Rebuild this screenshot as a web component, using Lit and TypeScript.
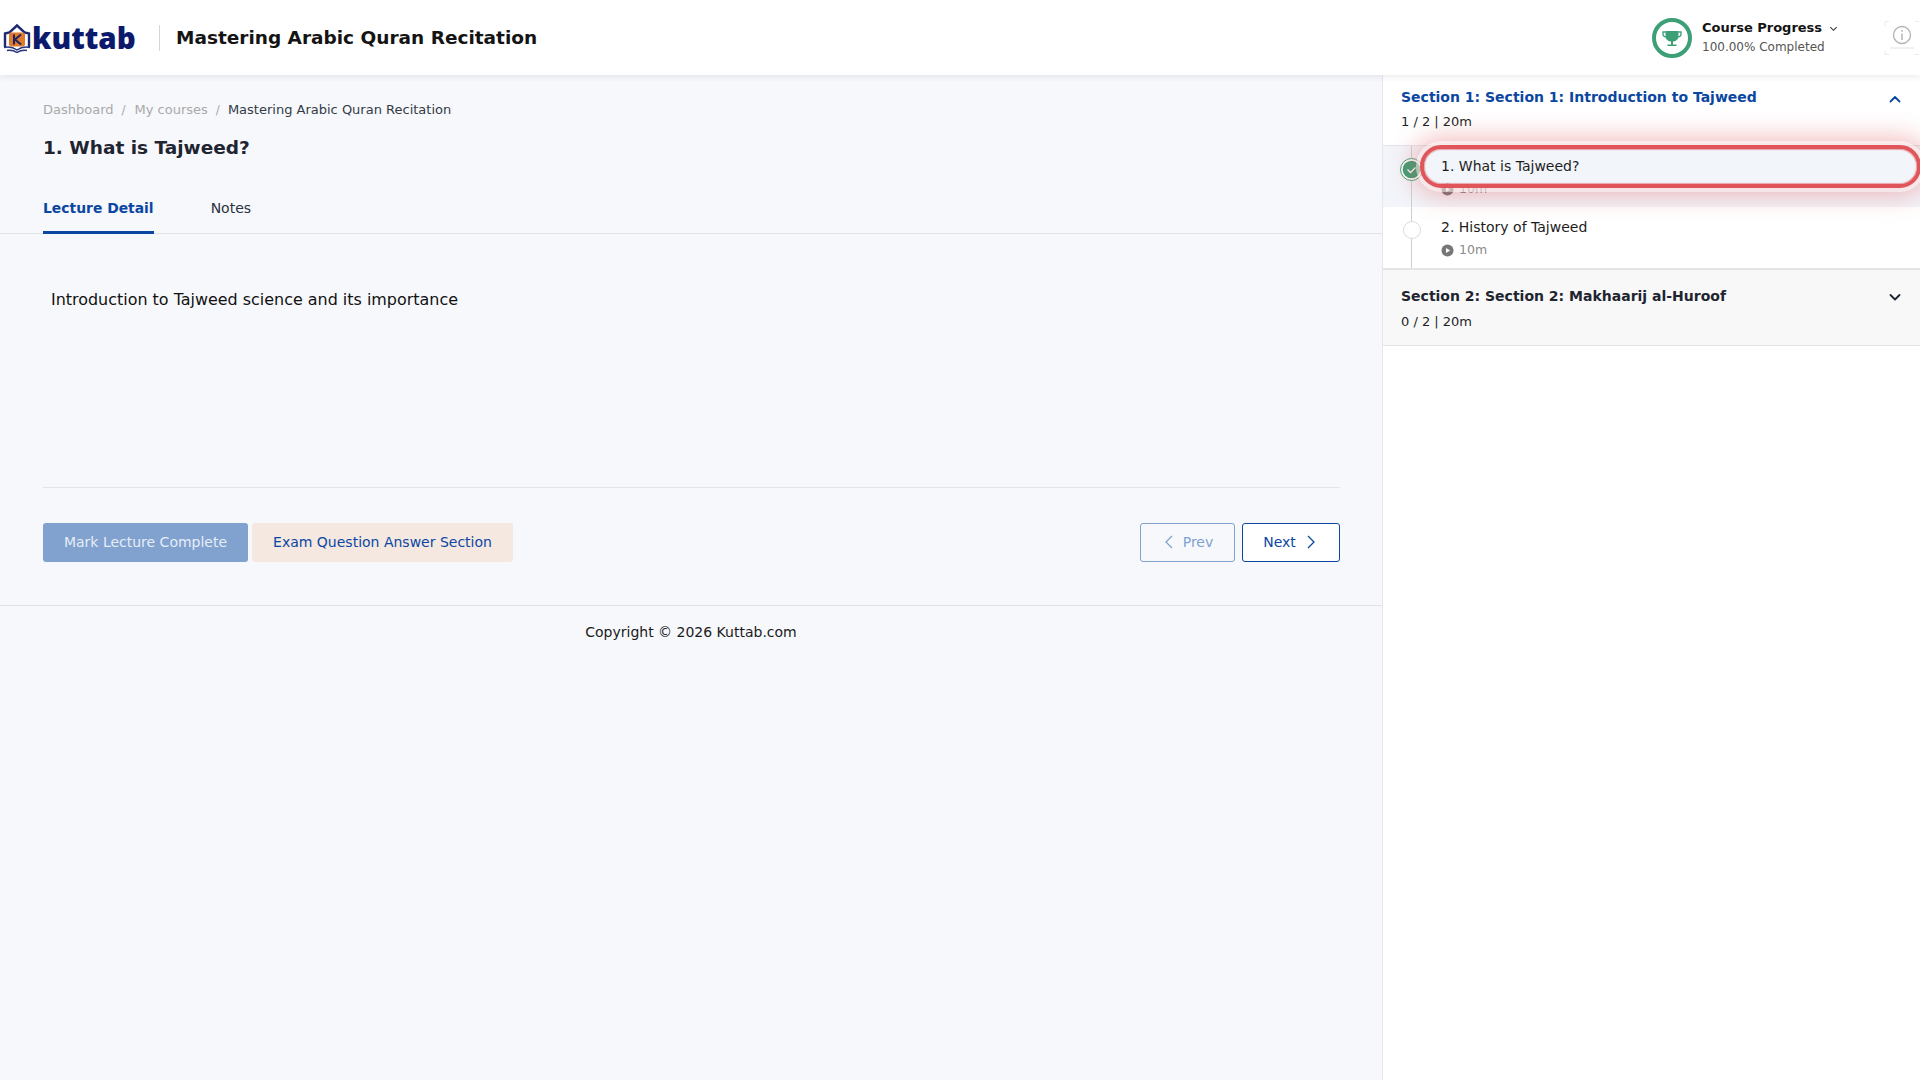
import { LitElement, html, css } from "lit";
import { customElement } from "lit/decorators.js";

const play = html`<svg class="play" viewBox="0 0 14 14" width="13" height="13"><circle cx="7" cy="7" r="6.5" fill="#777"/><path d="M5.4 4.2 9.8 7l-4.4 2.8z" fill="#fff"/></svg>`;
const chevron = (up: boolean, color: string) => html`<svg class="chev" viewBox="0 0 14 14" width="14" height="14"><path d=${up ? "M2.5 9.5 7 5l4.5 4.5" : "M2.5 5 7 9.5 11.5 5"} fill="none" stroke=${color} stroke-width="1.8" stroke-linecap="round" stroke-linejoin="round"/></svg>`;

@customElement("app-root")
export class AppRoot extends LitElement {
  static styles = css`
    :host { display: flex; flex-direction: column; height: 1080px; overflow: hidden; font-family: "DejaVu Sans", sans-serif; color: #1e2530; background: #f7f8fc; }
    * { box-sizing: border-box; }
    header { height: 75px; flex: none; background: #fff; display: flex; align-items: center; box-shadow: 0 2px 6px rgba(30,40,60,.09); position: relative; z-index: 3; padding-left: 3px; }
    .logo { display: flex; align-items: center; width: 156px; height: 40px; }
    .logo-word { font-family: "Open Sans", sans-serif; font-weight: 800; font-size: 29.5px; line-height: 40px; color: #0c1a6c; margin-left: 1px; }
    .divider { width: 1px; height: 26px; background: #d6d6d6; margin-right: 16px; }
    .course { font-size: 18.5px; font-weight: 700; color: #141414; flex: 1; }
    .progress { display: flex; align-items: center; gap: 10px; width: 232px; }
    .ptext { display: flex; flex-direction: column; gap: 3px; }
    .ptitle { display: flex; align-items: center; gap: 7px; font-size: 13px; font-weight: 700; color: #141414; line-height: 16px; }
    .psub { font-size: 12px; color: #555; line-height: 16px; }
    .info { width: 36px; height: 36px; flex: none; }
    .body { flex: 1; display: flex; min-height: 0; }
    main { width: 1383px; flex: none; border-right: 1px solid #e4e6ea; display: flex; flex-direction: column; }
    .top { padding: 27px 42px 0 43px; }
    .crumbs { display: flex; align-items: center; font-size: 13px; line-height: 16px; color: #a9a9a9; }
    .crumbs i { font-style: normal; margin: 0 9px 0 8px; font-size: 12px; }
    .crumbs b { font-weight: 400; color: #333b46; margin-left: -1px; }
    h1 { font-size: 18.5px; font-weight: 700; margin: 18px 0 0; line-height: 24px; color: #1e2530; }
    .tabs { display: flex; gap: 57px; padding: 0 43px; border-bottom: 1px solid #e2e4e9; margin-top: 28px; height: 46px; }
    .tab { font-size: 14px; line-height: 18px; padding-top: 11px; color: #2a3240; }
    .tab.on { font-size: 13.9px; font-weight: 700; color: #0b47a1; border-bottom: 3px solid #0b47a1; margin-bottom: -1px; }
    .content { padding: 56px 42px 0 43px; }
    .lead { font-size: 15.95px; line-height: 20px; color: #111; padding-left: 8px; height: 198px; margin: 0; border-bottom: 1px solid #e2e4e9; }
    .actions { display: flex; align-items: flex-start; padding-top: 35px; height: 117px; }
    .btn { height: 39px; border-radius: 3px; font-size: 14px; display: flex; align-items: center; justify-content: center; padding-bottom: 1px; }
    .mark { width: 205px; background: #81a1cf; color: #e6edf7; }
    .exam { width: 261px; background: #f4e8e1; color: #0b47a1; margin-left: 4px; }
    .spacer { flex: 1; }
    .prev { width: 95px; border: 1px solid #81a1cf; color: #81a1cf; gap: 9px; padding-left: 2px; }
    .next { width: 98px; margin-left: 7px; border: 1px solid #0b47a1; background: #fff; color: #0b47a1; gap: 10px; padding-right: 3px; }
    footer { border-top: 1px solid #e2e4e9; text-align: center; font-size: 14px; line-height: 18px; padding-top: 17px; color: #1a1a1a; }
    aside { flex: 1; background: #fff; min-width: 0; }
    .sec { height: 71px; padding: 13px 18px 0; position: relative; border-bottom: 1px solid #e2e4e9; }
    .sec.closed { height: 76px; padding-top: 17px; background: #f8f8f8; }
    .sec-title { font-size: 14px; font-weight: 700; line-height: 18px; color: #0b47a1; }
    .closed .sec-title { color: #1e2530; }
    .sec-sub { font-size: 13px; line-height: 18px; margin-top: 7px; color: #1f1f1f; }
    .closed .sec-sub { margin-top: 8px; }
    .sec .chev { position: absolute; right: 18px; top: 17px; }
    .sec.closed .chev { top: 20px; }
    .lesson { height: 61px; display: flex; position: relative; padding: 11px 0 0 58px; }
    .lesson + .lesson { height: 63px; border-bottom: 2px solid #e4e4e4; }
    .lesson.cur { background: #f2f5fa; }
    .line { position: absolute; left: 28px; top: 0; bottom: 0; width: 1px; background: #cfcfcf; }
    .dot { position: absolute; left: 20px; top: 14px; width: 18px; height: 18px; border-radius: 50%; background: #fff; border: 1px solid #dcdcdc; }
    .dot.done { left: 17px; top: 12px; width: 23px; height: 23px; border: 0; }
    .dot svg { display: block; }
    .ltitle { font-size: 14px; line-height: 18px; color: #1d1d1d; }
    .lmeta { display: flex; align-items: center; gap: 5px; font-size: 12.5px; line-height: 16px; color: #8a8a8a; margin-top: 6px; }
    .hl { position: absolute; left: 37px; top: -1px; width: 501px; height: 43px; border: 4px solid #e05559; border-radius: 21px; box-shadow: inset 0 0 1px 1px rgba(224,85,89,.5), 0 0 0 4px rgba(255,255,255,.5), 0 0 24px 8px rgba(224,85,89,.38); z-index: 1; }
  `;

  render() {
    return html`
      <header>
        <div class="logo">
          <svg width="28" height="30" viewBox="0 0 28 30" style="flex:none">
            <path d="M2 24V10.500L6.500 9.500 14 2.500l7.500 7L26 10.500V24" fill="#fff" stroke="#1d2a72" stroke-width="2.400"/>
            <path d="M7.500 9.500h13l1.500 1.500v11l-1.500 1.500h-13L6 22V11z" fill="#e27a2e"/>
            <path d="M11 11.500v10M18 11.500l-6 5 6 5" fill="none" stroke="#1b2560" stroke-width="2"/>
            <path d="M1 24.500c5-1 9.500 0 13 2.500 3.500-2.500 8-3.500 13-2.500M4 27.500c3.500-.5 7 0 10 2 3-2 6.500-2.500 10-2" fill="none" stroke="#27367f" stroke-width="1.500"/>
          </svg>
          <span class="logo-word">kuttab</span>
        </div>
        <div class="divider"></div>
        <div class="course">Mastering Arabic Quran Recitation</div>
        <div class="progress">
          <svg width="40" height="40" viewBox="0 0 40 40">
            <circle cx="20" cy="20" r="18" fill="#fff" stroke="#3d9f76" stroke-width="4"/>
            <path d="M13.500 13h13v4.500c0 4-2.500 6-6.500 6s-6.500-2-6.500-6z" fill="#3d9f76"/>
            <path d="M13.500 14h-2.500v2c0 1.800 1 2.800 3 3.200M26.500 14h2.500v2c0 1.800-1 2.800-3 3.200" fill="none" stroke="#3d9f76" stroke-width="1.300"/>
            <path d="M19 23h2v3.500h-2zM15.500 26.500h9V28h-9z" fill="#3d9f76"/>
          </svg>
          <div class="ptext">
            <div class="ptitle">Course Progress <svg viewBox="0 0 10 10" width="9" height="9"><path d="M1.500 3.500 5 7l3.500-3.500" fill="none" stroke="#333" stroke-width="1.200"/></svg></div>
            <div class="psub">100.00% Completed</div>
          </div>
        </div>
        <svg class="info" viewBox="0 0 36 36">
          <path d="M1 6V1.500h4M31 1.500h4M1 31v3.500h4M31 34.500h4" fill="none" stroke="#dfe5f0" stroke-width=".8"/>
          <circle cx="18" cy="15" r="8.500" fill="none" stroke="#b5b5b5" stroke-width="1.400"/>
          <path d="M18 13.500v6.500M18 10v1.800" stroke="#b5b5b5" stroke-width="1.500"/>
          <path d="M6 28h24" stroke="#e2e2e2" stroke-width="1"/>
        </svg>
      </header>
      <div class="body">
        <main>
          <div class="top">
            <div class="crumbs"><span>Dashboard</span><i>/</i><span>My courses</span><i>/</i><b>Mastering Arabic Quran Recitation</b></div>
            <h1>1. What is Tajweed?</h1>
          </div>
          <div class="tabs"><div class="tab on">Lecture Detail</div><div class="tab">Notes</div></div>
          <div class="content">
            <p class="lead">Introduction to Tajweed science and its importance</p>
            <div class="actions">
              <div class="btn mark">Mark Lecture Complete</div>
              <div class="btn exam">Exam Question Answer Section</div>
              <div class="spacer"></div>
              <div class="btn prev"><svg width="10" height="16" viewBox="0 0 10 16"><path d="M8 2 2 8l6 6" fill="none" stroke="#81a1cf" stroke-width="1.300"/></svg>Prev</div>
              <div class="btn next">Next<svg width="10" height="16" viewBox="0 0 10 16"><path d="m2 2 6 6-6 6" fill="none" stroke="#0b47a1" stroke-width="1.300"/></svg></div>
            </div>
          </div>
          <footer>Copyright © 2026 Kuttab.com</footer>
        </main>
        <aside>
          <div class="sec">
            <div class="sec-title">Section 1: Section 1: Introduction to Tajweed</div>
            <div class="sec-sub">1 / 2 | 20m</div>
            ${chevron(true, "#0b47a1")}
          </div>
          <div class="lesson cur">
            <div class="line"></div>
            <div class="dot done">
              <svg width="23" height="23" viewBox="0 0 23 23"><circle cx="11.500" cy="11.500" r="11" fill="#fff" stroke="#3d9f76"/><circle cx="11.500" cy="11.500" r="8.800" fill="#3d9f76"/><path d="m7.500 11.500 3 3 5-5" fill="none" stroke="#fff" stroke-width="1.300"/></svg>
            </div>
            <div>
              <div class="ltitle">1. What is Tajweed?</div>
              <div class="lmeta">${play}10m</div>
            </div>
            <div class="hl"></div>
          </div>
          <div class="lesson">
            <div class="line"></div>
            <div class="dot"></div>
            <div>
              <div class="ltitle">2. History of Tajweed</div>
              <div class="lmeta">${play}10m</div>
            </div>
          </div>
          <div class="sec closed">
            <div class="sec-title">Section 2: Section 2: Makhaarij al-Huroof</div>
            <div class="sec-sub">0 / 2 | 20m</div>
            ${chevron(false, "#1e2530")}
          </div>
        </aside>
      </div>
    `;
  }
}
